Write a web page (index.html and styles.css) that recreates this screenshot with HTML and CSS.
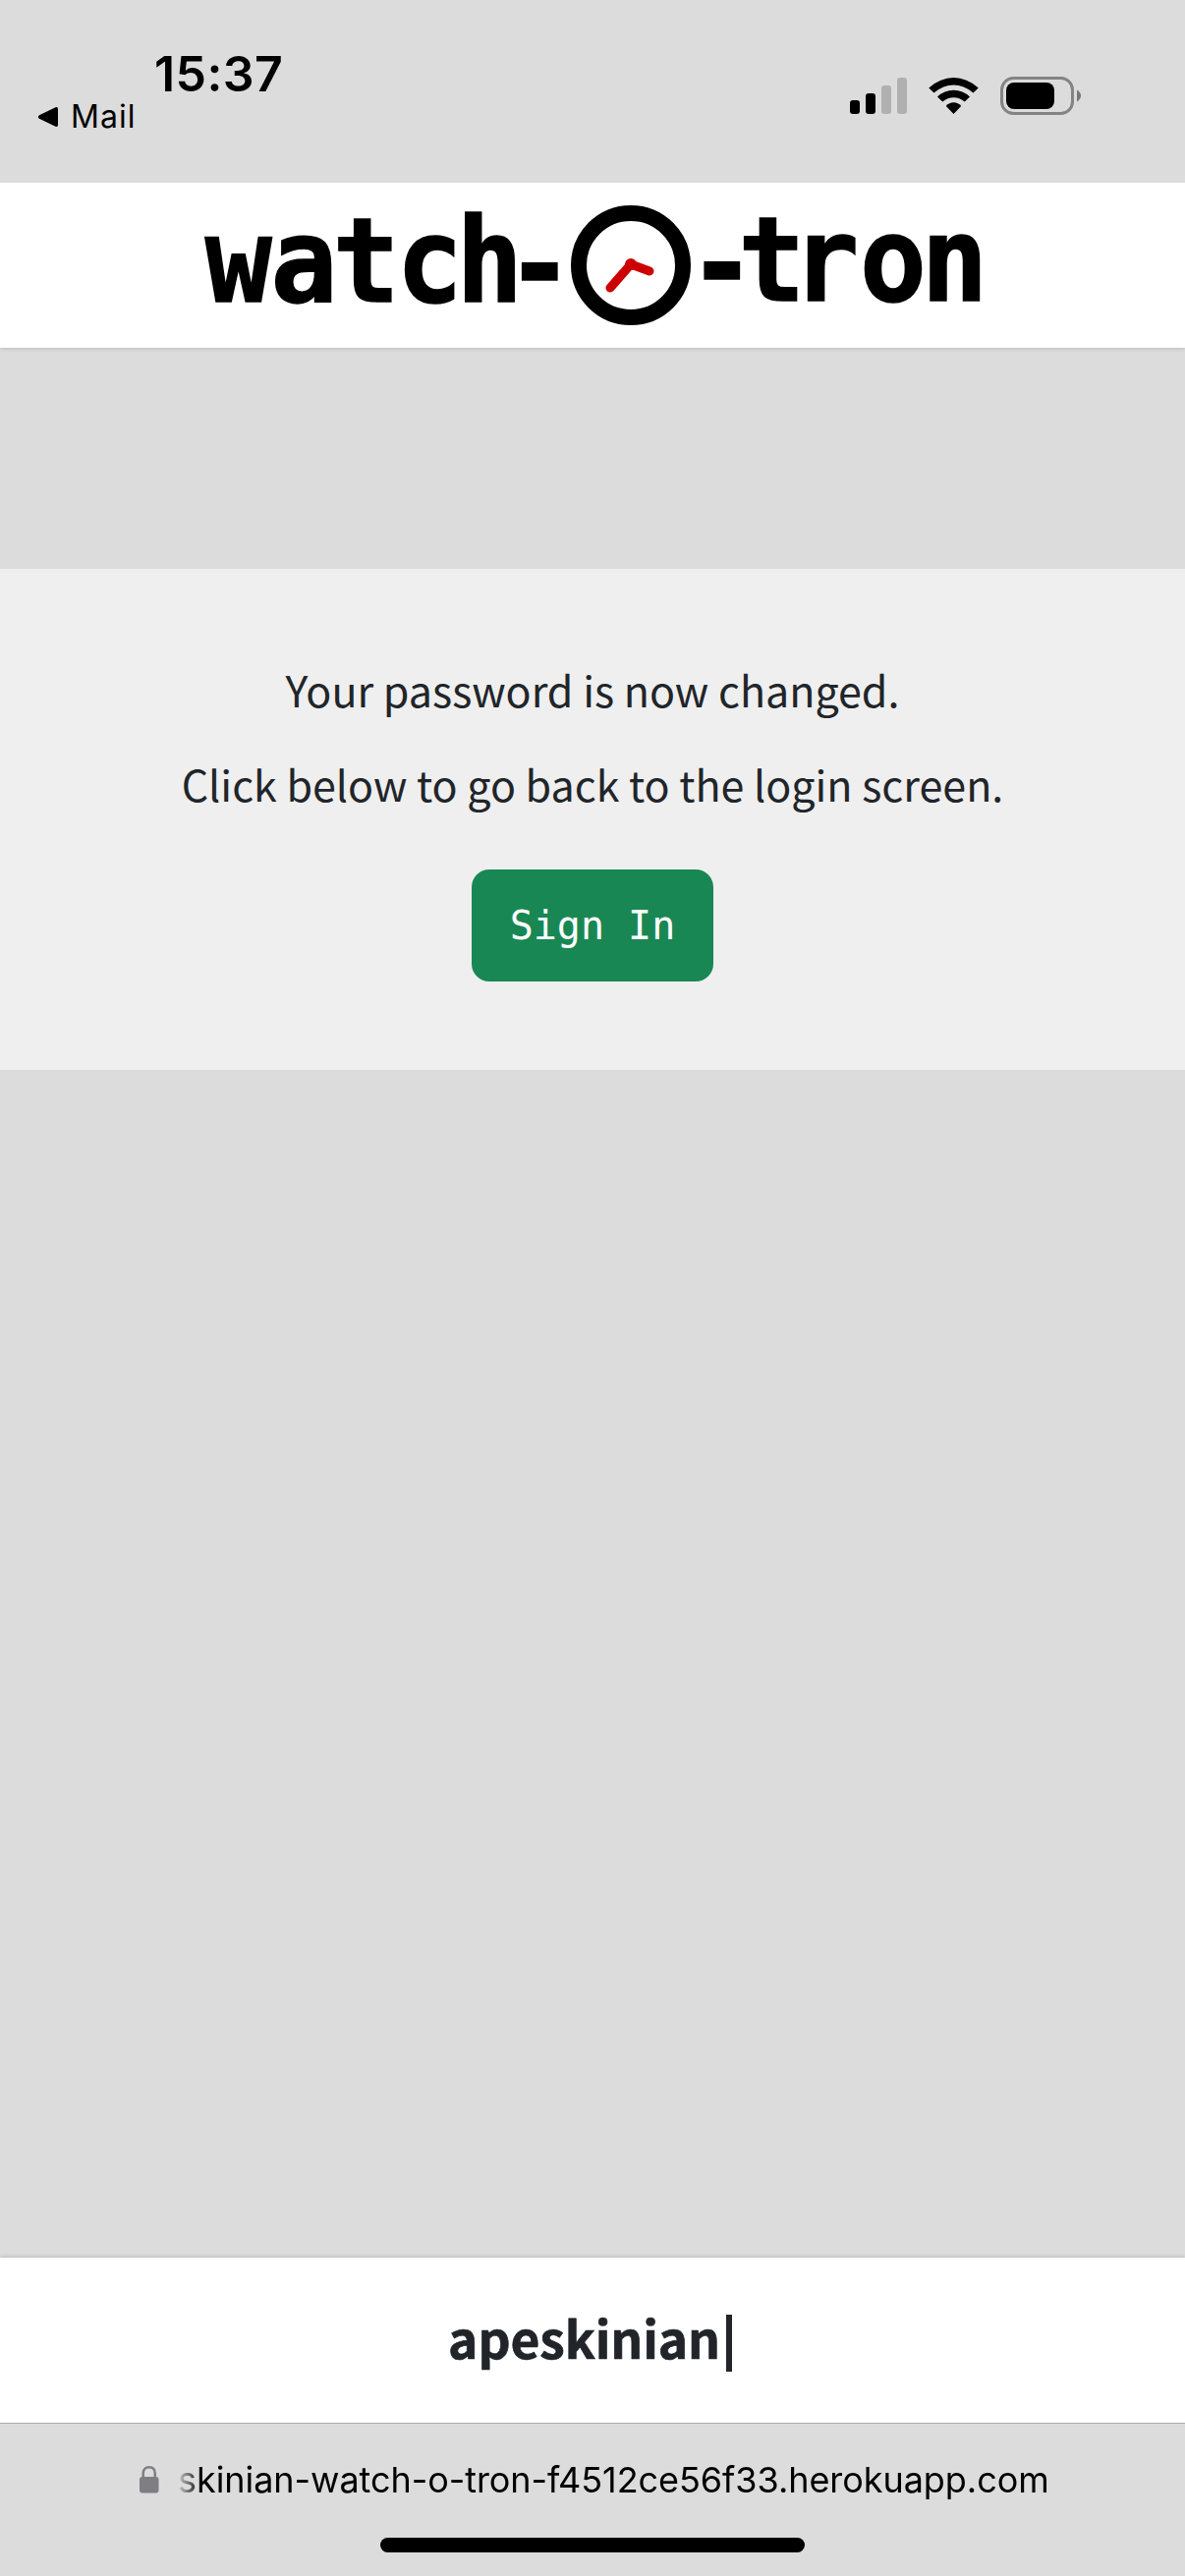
FILE: index.html
```html
<!DOCTYPE html>
<html lang="en">
<head>
<meta charset="utf-8">
<title>watch-o-tron</title>
<link rel="stylesheet" href="styles.css">
</head>
<body>
<div class="status">
  <div class="status-left">
    <div class="time">15:37</div>
    <div class="back">
      <svg width="22" height="22" viewBox="0 0 22 22"><path d="M2 9.2 18.5 1.2Q21 .4 21 3V19Q21 21.6 18.5 20.8L2 12.800Q-.4 11 2 9.200Z"/></svg>
      <span>Mail</span>
    </div>
  </div>
  <svg class="signals" width="236" height="40" viewBox="865 78 236 40">
    <rect x="865" y="102" width="10" height="14" rx="3"/>
    <rect x="881" y="95" width="10" height="21" rx="3"/>
    <rect x="897" y="87" width="10" height="29" rx="3" fill="#b0b0b0"/>
    <rect x="913" y="79" width="10" height="37" rx="3" fill="#b0b0b0"/>
    <path d="M945.300 89.500Q957 79 970.500 79T995.700 89.500L990.500 94.500Q981 86.500 970.500 86.500T950.500 94.500Z"/>
    <path d="M954 98.500Q961 91.700 970.500 91.700T987 98.500L981.800 103.600Q976.500 99.200 970.500 99.200T959.200 103.600Z"/>
    <path d="M962.800 108Q966 104.300 970.500 104.300T978.200 108L970.500 116Z"/>
    <rect x="1019.500" y="79.500" width="72" height="36" rx="12" fill="none" stroke="#848484" stroke-width="3"/>
    <rect x="1024" y="84" width="49" height="27" rx="8"/>
    <path d="M1096 91.500Q1100 94 1100 97.500T1096 103.500Z" fill="#777"/>
  </svg>
</div>
<header class="header">
  <svg class="logo" width="806" height="168" viewBox="200 186 806 168">
    <g class="logo-text" transform="scale(.94 1)">
      <text y="307" x="222 293.200 360.400 429 494">watch</text>
      <text class="dash" y="311.200" x="547.700">-</text>
      <text class="dash" y="310" x="745">-</text>
      <text y="306" x="799.500 858.100 930.900 997.400">tron</text>
    </g>
    <circle cx="642" cy="270" r="53" fill="none" stroke="#000" stroke-width="16"/>
    <g stroke="#c00" stroke-width="9" stroke-linecap="round" fill="#c00">
      <path d="M642 269 621 293M642 269 661 276"/>
      <circle cx="642" cy="269" r="1.500"/>
    </g>
  </svg>
</header>
<main class="main">
  <section class="card">
    <p class="line">Your password is now changed.</p>
    <p class="line">Click below to go back to the login screen.</p>
    <a class="button">Sign In</a>
  </section>
</main>
<footer class="footer"><span class="name">apeskinian</span><span class="cursor"></span></footer>
<div class="browser">
  <div class="address">
    <svg width="20" height="28" viewBox="0 0 20 28"><rect y="11" width="19.500" height="16.500" rx="3" fill="#7e7e83"/><path d="M3.700 12V8Q3.700 1.300 9.750 1.300T15.800 8V12" fill="none" stroke="#7e7e83" stroke-width="2.500"/></svg>
    <span class="url">skinian-watch-o-tron-f4512ce56f33.herokuapp.com</span>
  </div>
  <div class="home"></div>
</div>
</body>
</html>
```
FILE: styles.css
```css
* { box-sizing: border-box; }
body {
  margin: 0;
  width: 1206px;
  height: 2622px;
  display: flex;
  flex-direction: column;
  background: #dcdcdc;
  color: #212529;
  font-family: "Noto Sans CJK SC", sans-serif;
  overflow: hidden;
}
svg { display: block; flex: none; }
.status {
  height: 186px;
  display: flex;
  justify-content: space-between;
  padding: 45px 105px 0 38px;
  position: relative;
  z-index: 1;
  background: #dcdcdc;
  color: #000;
  font-family: Inter, sans-serif;
}
.time {
  padding-left: 119px;
  font-size: 50px;
  line-height: 60px;
  font-weight: 600;
  letter-spacing: .4px;
}
.back {
  display: flex;
  align-items: center;
  gap: 12px;
  height: 40px;
  margin-top: -7px;
  font-size: 32px;
  letter-spacing: 1px;
}
.back svg { margin-top: 1px; }
.signals { margin-top: 33px; }
.header {
  height: 168px;
  display: flex;
  justify-content: center;
  background: #fff;
  box-shadow: 0 1px 4px rgba(0, 0, 0, .15);
}
.logo { overflow: visible; }
.logo-text {
  font: bold 120px "DejaVu Sans Mono", monospace;
  stroke: #000;
  stroke-width: 1.5px;
}
.dash { font-size: 122px; }
.main { flex: 1; padding-top: 225px; }
.card {
  height: 510px;
  padding-top: 86px;
  display: flex;
  flex-direction: column;
  align-items: center;
  background: #efefef;
}
.line {
  margin: 0 0 24px;
  font-size: 43px;
  line-height: 72px;
  white-space: nowrap;
}
.button {
  width: 246px;
  height: 114px;
  margin-top: 28px;
  border-radius: 18px;
  background: #198754;
  color: #fff;
  font: 40px/115px "DejaVu Sans Mono", monospace;
  text-align: center;
}
.footer {
  height: 168px;
  display: flex;
  align-items: center;
  justify-content: center;
  padding-right: 5px;
  background: #fff;
  box-shadow: 0 -1px 4px rgba(0, 0, 0, .15);
}
.name {
  margin-top: -6px;
  font-size: 51.5px;
  line-height: 60px;
  font-weight: 700;
  letter-spacing: -.1px;
  -webkit-text-stroke: .7px #212529;
}
.cursor {
  width: 6px;
  height: 58px;
  margin: 6px 0 0 6px;
  background: #212529;
}
.browser {
  height: 156px;
  border-top: 1px solid #ababab;
  display: flex;
  flex-direction: column;
  align-items: center;
  position: relative;
  z-index: 1;
  background: #dcdcdc;
}
.address {
  display: flex;
  align-items: center;
  gap: 19px;
  align-self: flex-start;
  height: 48px;
  margin: 33px 0 0 142px;
}
.url {
  color: transparent;
  background: linear-gradient(90deg, #ccc 0, #000 24px);
  background-clip: text;
  -webkit-background-clip: text;
  font: 36px/48px Inter, sans-serif;
  letter-spacing: -.06px;
  white-space: nowrap;
}
.home {
  width: 432px;
  height: 15px;
  margin-top: 35px;
  border-radius: 8px;
  background: #000;
}
```
